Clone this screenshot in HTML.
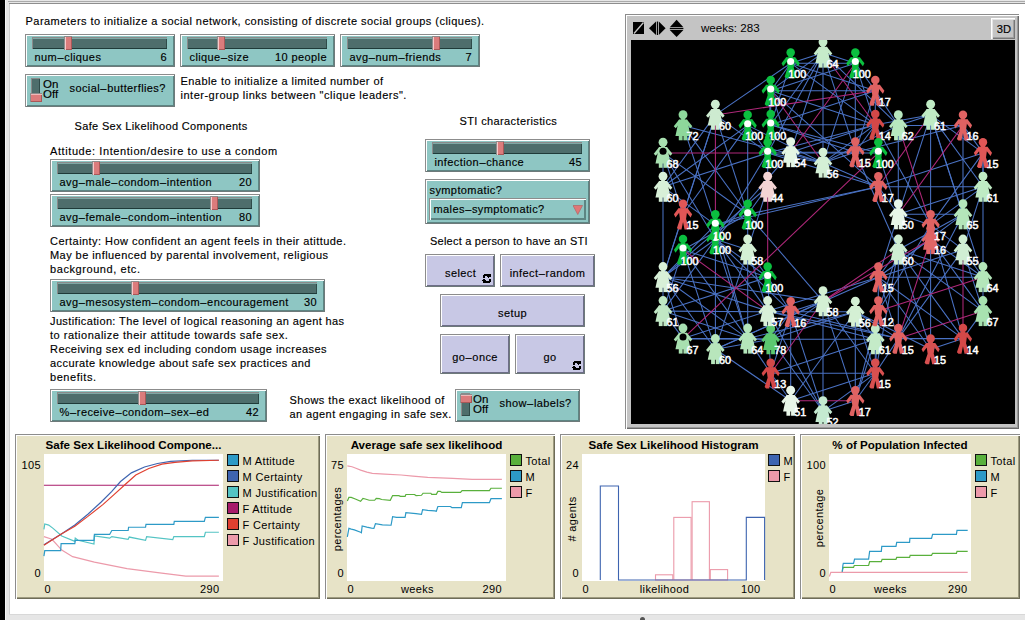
<!DOCTYPE html>
<html><head><meta charset="utf-8"><style>
html,body{margin:0;padding:0;width:1025px;height:620px;overflow:hidden;background:#fff}
body{position:relative;font-family:"Liberation Sans", sans-serif;color:#000}
.t,.box{position:absolute;white-space:pre}
div.t{-webkit-text-stroke:0.15px #000}
.box{box-sizing:border-box}
</style></head><body>
<div class="box" style="left:0;top:0;width:5px;height:620px;background:#000"></div>
<div class="box" style="left:5px;top:0;width:1020px;height:620px;background:#e6e6e6"></div>
<div class="box" style="left:5px;top:0;width:1px;height:620px;background:#f6f6f6"></div>
<div class="box" style="left:8px;top:1px;width:1017px;height:1px;background:#aaaaaa"></div>
<div class="box" style="left:9px;top:3px;width:1016px;height:1px;background:#8e8e8e"></div>
<div class="box" style="left:9px;top:4px;width:1px;height:610px;background:#d0d0d0"></div>
<div class="box" style="left:10px;top:4px;width:1015px;height:610px;background:#fff"></div>
<div class="box" style="left:9px;top:614px;width:1016px;height:1px;background:#d8d8d8"></div>
<div class="box" style="left:640px;top:617px;width:5px;height:5px;border-radius:3px;background:#555"></div>
<div class="t" style="left:25.5px;top:14.19px;font-size:11px;font-weight:400;color:#000;line-height:14px;letter-spacing:0.461px;">Parameters to initialize a social network, consisting of discrete social groups (cliques).</div>
<div class="box" style="left:25px;top:34px;width:150px;height:33px;background:#8ec6c3;box-shadow: inset 1px 1px 0 #8c8c8c, inset -1px -1px 0 #6e7a7a, inset 2px 2px 0 #fff, inset -2px -2px 0 #5d8583"></div>
<div class="box" style="left:32px;top:37px;width:135px;height:12px;background:#4e6e6c;box-shadow: inset 1px 1px 0 #8a8a8a, inset 0 2px 0 #7fa8a5, inset 0 -1px 0 #1f3b39, inset -1px 0 0 #2f4b49"></div>
<div class="box" style="left:64px;top:36px;width:8px;height:14px;background:#db7c7c;box-shadow: inset 1px 1px 0 #8c8c8c, inset 2px 0 0 #f6caca, inset -1px -1px 0 #a85858"></div>
<div class="t" style="left:34.5px;top:50.19px;font-size:11px;font-weight:400;color:#000;line-height:14px;letter-spacing:0.4px;">num<span style="margin:0 0.3px">&#8211;</span>cliques</div>
<div class="t" style="right:858px;top:50.19px;font-size:11px;font-weight:400;color:#000;line-height:14px;text-align:right;letter-spacing:0.4px">6</div>
<div class="box" style="left:180px;top:34px;width:155px;height:33px;background:#8ec6c3;box-shadow: inset 1px 1px 0 #8c8c8c, inset -1px -1px 0 #6e7a7a, inset 2px 2px 0 #fff, inset -2px -2px 0 #5d8583"></div>
<div class="box" style="left:187px;top:37px;width:140px;height:12px;background:#4e6e6c;box-shadow: inset 1px 1px 0 #8a8a8a, inset 0 2px 0 #7fa8a5, inset 0 -1px 0 #1f3b39, inset -1px 0 0 #2f4b49"></div>
<div class="box" style="left:217px;top:36px;width:8px;height:14px;background:#db7c7c;box-shadow: inset 1px 1px 0 #8c8c8c, inset 2px 0 0 #f6caca, inset -1px -1px 0 #a85858"></div>
<div class="t" style="left:189.5px;top:50.19px;font-size:11px;font-weight:400;color:#000;line-height:14px;letter-spacing:0.4px;">clique<span style="margin:0 0.3px">&#8211;</span>size</div>
<div class="t" style="right:698px;top:50.19px;font-size:11px;font-weight:400;color:#000;line-height:14px;text-align:right;letter-spacing:0.4px">10 people</div>
<div class="box" style="left:340px;top:34px;width:140px;height:33px;background:#8ec6c3;box-shadow: inset 1px 1px 0 #8c8c8c, inset -1px -1px 0 #6e7a7a, inset 2px 2px 0 #fff, inset -2px -2px 0 #5d8583"></div>
<div class="box" style="left:347px;top:37px;width:125px;height:12px;background:#4e6e6c;box-shadow: inset 1px 1px 0 #8a8a8a, inset 0 2px 0 #7fa8a5, inset 0 -1px 0 #1f3b39, inset -1px 0 0 #2f4b49"></div>
<div class="box" style="left:432px;top:36px;width:8px;height:14px;background:#db7c7c;box-shadow: inset 1px 1px 0 #8c8c8c, inset 2px 0 0 #f6caca, inset -1px -1px 0 #a85858"></div>
<div class="t" style="left:349.5px;top:50.19px;font-size:11px;font-weight:400;color:#000;line-height:14px;letter-spacing:0.4px;">avg<span style="margin:0 0.3px">&#8211;</span>num<span style="margin:0 0.3px">&#8211;</span>friends</div>
<div class="t" style="right:553px;top:50.19px;font-size:11px;font-weight:400;color:#000;line-height:14px;text-align:right;letter-spacing:0.4px">7</div>
<div class="box" style="left:25px;top:74px;width:150px;height:33px;background:#8ec6c3;box-shadow: inset 1px 1px 0 #8c8c8c, inset -1px -1px 0 #6e7a7a, inset 2px 2px 0 #fff, inset -2px -2px 0 #5d8583"></div>
<div class="box" style="left:31px;top:78px;width:9px;height:23px;background:#4e6e6c;box-shadow: inset 1px 1px 0 #8a8a8a, inset -1px -1px 0 #2f4b49"></div>
<div class="box" style="left:30px;top:93px;width:12px;height:9px;background:#db7c7c;box-shadow: inset 1px 1px 0 #8c8c8c, inset 0 2px 0 #f0b8b8, inset -1px -1px 0 #a85858"></div>
<div class="t" style="left:43px;top:79px;font-size:11.5px;line-height:10px">On<br>Off</div>
<div class="t" style="left:69.5px;top:81.19px;font-size:11px;font-weight:400;color:#000;line-height:14px;letter-spacing:0.4px;">social<span style="margin:0 0.3px">&#8211;</span>butterflies?</div>
<div class="t" style="left:180.5px;top:74.19px;font-size:11px;font-weight:400;color:#000;line-height:14px;letter-spacing:0.442px;">Enable to initialize a limited number of</div>
<div class="t" style="left:180.5px;top:88.19px;font-size:11px;font-weight:400;color:#000;line-height:14px;letter-spacing:0.505px;">inter-group links between "clique leaders".</div>
<div class="t" style="left:74.5px;top:118.69px;font-size:11px;font-weight:400;color:#000;line-height:14px;letter-spacing:0.349px;">Safe Sex Likelihood Components</div>
<div class="t" style="left:50.0px;top:143.69px;font-size:11px;font-weight:400;color:#000;line-height:14px;letter-spacing:0.589px;">Attitude: Intention/desire to use a condom</div>
<div class="box" style="left:50px;top:159px;width:210px;height:33px;background:#8ec6c3;box-shadow: inset 1px 1px 0 #8c8c8c, inset -1px -1px 0 #6e7a7a, inset 2px 2px 0 #fff, inset -2px -2px 0 #5d8583"></div>
<div class="box" style="left:57px;top:162px;width:195px;height:12px;background:#4e6e6c;box-shadow: inset 1px 1px 0 #8a8a8a, inset 0 2px 0 #7fa8a5, inset 0 -1px 0 #1f3b39, inset -1px 0 0 #2f4b49"></div>
<div class="box" style="left:92px;top:161px;width:8px;height:14px;background:#db7c7c;box-shadow: inset 1px 1px 0 #8c8c8c, inset 2px 0 0 #f6caca, inset -1px -1px 0 #a85858"></div>
<div class="t" style="left:59.5px;top:175.19px;font-size:11px;font-weight:400;color:#000;line-height:14px;letter-spacing:0.4px;">avg<span style="margin:0 0.3px">&#8211;</span>male<span style="margin:0 0.3px">&#8211;</span>condom<span style="margin:0 0.3px">&#8211;</span>intention</div>
<div class="t" style="right:773px;top:175.19px;font-size:11px;font-weight:400;color:#000;line-height:14px;text-align:right;letter-spacing:0.4px">20</div>
<div class="box" style="left:50px;top:194px;width:210px;height:33px;background:#8ec6c3;box-shadow: inset 1px 1px 0 #8c8c8c, inset -1px -1px 0 #6e7a7a, inset 2px 2px 0 #fff, inset -2px -2px 0 #5d8583"></div>
<div class="box" style="left:57px;top:197px;width:195px;height:12px;background:#4e6e6c;box-shadow: inset 1px 1px 0 #8a8a8a, inset 0 2px 0 #7fa8a5, inset 0 -1px 0 #1f3b39, inset -1px 0 0 #2f4b49"></div>
<div class="box" style="left:210px;top:196px;width:8px;height:14px;background:#db7c7c;box-shadow: inset 1px 1px 0 #8c8c8c, inset 2px 0 0 #f6caca, inset -1px -1px 0 #a85858"></div>
<div class="t" style="left:59.5px;top:210.19px;font-size:11px;font-weight:400;color:#000;line-height:14px;letter-spacing:0.4px;">avg<span style="margin:0 0.3px">&#8211;</span>female<span style="margin:0 0.3px">&#8211;</span>condom<span style="margin:0 0.3px">&#8211;</span>intention</div>
<div class="t" style="right:773px;top:210.19px;font-size:11px;font-weight:400;color:#000;line-height:14px;text-align:right;letter-spacing:0.4px">80</div>
<div class="t" style="left:50.0px;top:234.19px;font-size:11px;font-weight:400;color:#000;line-height:14px;letter-spacing:0.451px;">Certainty: How confident an agent feels in their atittude.</div>
<div class="t" style="left:50.0px;top:248.19px;font-size:11px;font-weight:400;color:#000;line-height:14px;letter-spacing:0.439px;">May be influenced by parental involvement, religious</div>
<div class="t" style="left:50.0px;top:262.19px;font-size:11px;font-weight:400;color:#000;line-height:14px;letter-spacing:0.577px;">background, etc.</div>
<div class="box" style="left:50px;top:279px;width:275px;height:33px;background:#8ec6c3;box-shadow: inset 1px 1px 0 #8c8c8c, inset -1px -1px 0 #6e7a7a, inset 2px 2px 0 #fff, inset -2px -2px 0 #5d8583"></div>
<div class="box" style="left:57px;top:282px;width:260px;height:12px;background:#4e6e6c;box-shadow: inset 1px 1px 0 #8a8a8a, inset 0 2px 0 #7fa8a5, inset 0 -1px 0 #1f3b39, inset -1px 0 0 #2f4b49"></div>
<div class="box" style="left:131px;top:281px;width:8px;height:14px;background:#db7c7c;box-shadow: inset 1px 1px 0 #8c8c8c, inset 2px 0 0 #f6caca, inset -1px -1px 0 #a85858"></div>
<div class="t" style="left:59.5px;top:295.19px;font-size:11px;font-weight:400;color:#000;line-height:14px;letter-spacing:0.4px;">avg<span style="margin:0 0.3px">&#8211;</span>mesosystem<span style="margin:0 0.3px">&#8211;</span>condom<span style="margin:0 0.3px">&#8211;</span>encouragement</div>
<div class="t" style="right:708px;top:295.19px;font-size:11px;font-weight:400;color:#000;line-height:14px;text-align:right;letter-spacing:0.4px">30</div>
<div class="t" style="left:50.0px;top:314.19px;font-size:11px;font-weight:400;color:#000;line-height:14px;letter-spacing:0.377px;">Justification: The level of logical reasoning an agent has</div>
<div class="t" style="left:50.0px;top:328.19px;font-size:11px;font-weight:400;color:#000;line-height:14px;letter-spacing:0.504px;">to rationalize their attitude towards safe sex.</div>
<div class="t" style="left:50.0px;top:342.19px;font-size:11px;font-weight:400;color:#000;line-height:14px;letter-spacing:0.435px;">Receiving sex ed including condom usage increases</div>
<div class="t" style="left:50.0px;top:356.19px;font-size:11px;font-weight:400;color:#000;line-height:14px;letter-spacing:0.425px;">accurate knowledge about safe sex practices and</div>
<div class="t" style="left:50.0px;top:370.19px;font-size:11px;font-weight:400;color:#000;line-height:14px;letter-spacing:0.551px;">benefits.</div>
<div class="box" style="left:50px;top:389px;width:217px;height:33px;background:#8ec6c3;box-shadow: inset 1px 1px 0 #8c8c8c, inset -1px -1px 0 #6e7a7a, inset 2px 2px 0 #fff, inset -2px -2px 0 #5d8583"></div>
<div class="box" style="left:57px;top:392px;width:202px;height:12px;background:#4e6e6c;box-shadow: inset 1px 1px 0 #8a8a8a, inset 0 2px 0 #7fa8a5, inset 0 -1px 0 #1f3b39, inset -1px 0 0 #2f4b49"></div>
<div class="box" style="left:138px;top:391px;width:8px;height:14px;background:#db7c7c;box-shadow: inset 1px 1px 0 #8c8c8c, inset 2px 0 0 #f6caca, inset -1px -1px 0 #a85858"></div>
<div class="t" style="left:59.5px;top:405.19px;font-size:11px;font-weight:400;color:#000;line-height:14px;letter-spacing:0.4px;">%<span style="margin:0 0.3px">&#8211;</span>receive<span style="margin:0 0.3px">&#8211;</span>condom<span style="margin:0 0.3px">&#8211;</span>sex<span style="margin:0 0.3px">&#8211;</span>ed</div>
<div class="t" style="right:766px;top:405.19px;font-size:11px;font-weight:400;color:#000;line-height:14px;text-align:right;letter-spacing:0.4px">42</div>
<div class="t" style="left:459.5px;top:114.19px;font-size:11px;font-weight:400;color:#000;line-height:14px;letter-spacing:0.38px;">STI characteristics</div>
<div class="box" style="left:425px;top:139px;width:165px;height:33px;background:#8ec6c3;box-shadow: inset 1px 1px 0 #8c8c8c, inset -1px -1px 0 #6e7a7a, inset 2px 2px 0 #fff, inset -2px -2px 0 #5d8583"></div>
<div class="box" style="left:432px;top:142px;width:150px;height:12px;background:#4e6e6c;box-shadow: inset 1px 1px 0 #8a8a8a, inset 0 2px 0 #7fa8a5, inset 0 -1px 0 #1f3b39, inset -1px 0 0 #2f4b49"></div>
<div class="box" style="left:496px;top:141px;width:8px;height:14px;background:#db7c7c;box-shadow: inset 1px 1px 0 #8c8c8c, inset 2px 0 0 #f6caca, inset -1px -1px 0 #a85858"></div>
<div class="t" style="left:434.5px;top:155.19px;font-size:11px;font-weight:400;color:#000;line-height:14px;letter-spacing:0.4px;">infection<span style="margin:0 0.3px">&#8211;</span>chance</div>
<div class="t" style="right:443px;top:155.19px;font-size:11px;font-weight:400;color:#000;line-height:14px;text-align:right;letter-spacing:0.4px">45</div>
<div class="box" style="left:425px;top:179px;width:165px;height:45px;background:#8ec6c3;box-shadow: inset 1px 1px 0 #8c8c8c, inset -1px -1px 0 #6e7a7a, inset 2px 2px 0 #fff, inset -2px -2px 0 #5d8583"></div>
<div class="t" style="left:429.5px;top:183.19px;font-size:11px;font-weight:400;color:#000;line-height:14px;letter-spacing:0.4px;">symptomatic?</div>
<div class="box" style="left:429px;top:198px;width:157px;height:22px;background:#8ec6c3;box-shadow: inset 1px 1px 0 #8c8c8c, inset 2px 2px 0 #fff, inset -1px -1px 0 #5d8583, inset -2px -2px 0 #5d8583"></div>
<div class="t" style="left:433.5px;top:201.69px;font-size:11px;font-weight:400;color:#000;line-height:14px;letter-spacing:0.4px;">males<span style="margin:0 0.3px">&#8211;</span>symptomatic?</div>
<svg class="t" style="left:573px;top:205px" width="10" height="10"><path d="M0 0.5 L9.5 0.5 L4.75 9.5 Z" fill="#e07878" stroke="#b05a5a" stroke-width="0.6"/></svg>
<div class="t" style="left:430.0px;top:234.19px;font-size:11px;font-weight:400;color:#000;line-height:14px;letter-spacing:0.223px;">Select a person to have an STI</div>
<div class="box" style="left:425px;top:254px;width:70px;height:33px;background:#c8c8e5;box-shadow: inset 1px 1px 0 #8c8c8c, inset -1px -1px 0 #6e7a7a, inset 2px 2px 0 #fff, inset -2px -2px 0 #6e6e88"></div>
<div class="t" style="left:445.0px;top:266.19px;font-size:11px;font-weight:400;color:#000;line-height:14px;letter-spacing:0.4px;">select</div>
<svg class="t" style="left:482px;top:274px" width="9" height="9" viewBox="0 0 8 9" shape-rendering="crispEdges"><rect x="1" y="0" width="5" height="2"/><rect x="0" y="1" width="2" height="3"/><polygon points="4.5,0 8,0 8,2.5 6.2,4.3 4.5,2.5"/><rect x="2" y="7" width="5" height="2"/><rect x="6" y="5" width="2" height="3"/><polygon points="3.5,9 0,9 0,6.5 1.8,4.7 3.5,6.5"/></svg>
<div class="box" style="left:500px;top:254px;width:95px;height:33px;background:#c8c8e5;box-shadow: inset 1px 1px 0 #8c8c8c, inset -1px -1px 0 #6e7a7a, inset 2px 2px 0 #fff, inset -2px -2px 0 #6e6e88"></div>
<div class="t" style="left:347.5px;width:400px;top:266.19px;font-size:11px;font-weight:400;color:#000;line-height:14px;text-align:center;letter-spacing:0.4px">infect<span style="margin:0 0.3px">&#8211;</span>random</div>
<div class="box" style="left:440px;top:294px;width:145px;height:33px;background:#c8c8e5;box-shadow: inset 1px 1px 0 #8c8c8c, inset -1px -1px 0 #6e7a7a, inset 2px 2px 0 #fff, inset -2px -2px 0 #6e6e88"></div>
<div class="t" style="left:312.5px;width:400px;top:306.19px;font-size:11px;font-weight:400;color:#000;line-height:14px;text-align:center;letter-spacing:0.4px">setup</div>
<div class="box" style="left:440px;top:334px;width:70px;height:40px;background:#c8c8e5;box-shadow: inset 1px 1px 0 #8c8c8c, inset -1px -1px 0 #6e7a7a, inset 2px 2px 0 #fff, inset -2px -2px 0 #6e6e88"></div>
<div class="t" style="left:275.0px;width:400px;top:350.19px;font-size:11px;font-weight:400;color:#000;line-height:14px;text-align:center;letter-spacing:0.4px">go<span style="margin:0 0.3px">&#8211;</span>once</div>
<div class="box" style="left:515px;top:334px;width:70px;height:40px;background:#c8c8e5;box-shadow: inset 1px 1px 0 #8c8c8c, inset -1px -1px 0 #6e7a7a, inset 2px 2px 0 #fff, inset -2px -2px 0 #6e6e88"></div>
<div class="t" style="left:350.0px;width:400px;top:350.19px;font-size:11px;font-weight:400;color:#000;line-height:14px;text-align:center;letter-spacing:0.4px">go</div>
<svg class="t" style="left:572px;top:361px" width="9" height="9" viewBox="0 0 8 9" shape-rendering="crispEdges"><rect x="1" y="0" width="5" height="2"/><rect x="0" y="1" width="2" height="3"/><polygon points="4.5,0 8,0 8,2.5 6.2,4.3 4.5,2.5"/><rect x="2" y="7" width="5" height="2"/><rect x="6" y="5" width="2" height="3"/><polygon points="3.5,9 0,9 0,6.5 1.8,4.7 3.5,6.5"/></svg>
<div class="t" style="left:289.5px;top:393.49px;font-size:11px;font-weight:400;color:#000;line-height:14px;letter-spacing:0.462px;">Shows the exact likelihood of</div>
<div class="t" style="left:289.5px;top:407.49px;font-size:11px;font-weight:400;color:#000;line-height:14px;letter-spacing:0.412px;">an agent engaging in safe sex.</div>
<div class="box" style="left:455px;top:389px;width:125px;height:33px;background:#8ec6c3;box-shadow: inset 1px 1px 0 #8c8c8c, inset -1px -1px 0 #6e7a7a, inset 2px 2px 0 #fff, inset -2px -2px 0 #5d8583"></div>
<div class="box" style="left:461px;top:393px;width:9px;height:23px;background:#4e6e6c;box-shadow: inset 1px 1px 0 #8a8a8a, inset -1px -1px 0 #2f4b49"></div>
<div class="box" style="left:460px;top:394px;width:12px;height:9px;background:#db7c7c;box-shadow: inset 1px 1px 0 #8c8c8c, inset 0 2px 0 #f0b8b8, inset -1px -1px 0 #a85858"></div>
<div class="t" style="left:473px;top:394px;font-size:11.5px;line-height:10px">On<br>Off</div>
<div class="t" style="left:499.5px;top:396.19px;font-size:11px;font-weight:400;color:#000;line-height:14px;letter-spacing:0.4px;">show<span style="margin:0 0.3px">&#8211;</span>labels?</div>

<div class="box" style="left:625px;top:14px;width:394px;height:415px;background:#c4c4c4;box-shadow: inset 1px 1px 0 #8c8c8c, inset 2px 2px 0 #fff, inset -1px -1px 0 #6a6a6a, inset -2px -2px 0 #9a9a9a"></div>
<svg class="t" style="left:0;top:0" width="1025" height="60">
 <rect x="633" y="22" width="11" height="12" fill="#000"/>
 <line x1="634" y1="33.5" x2="643.5" y2="22.5" stroke="#c8c8c8" stroke-width="1.3"/>
 <polygon points="656,21.5 656,35 649,28.2" fill="#000"/>
 <rect x="656.8" y="21.5" width="1.2" height="13.5" fill="#000"/>
 <polygon points="658.8,21.5 658.8,35 665.6,28.2" fill="#000"/>
 <polygon points="669.8,27.2 683.4,27.2 676.6,19.8" fill="#000"/>
 <rect x="669.8" y="28" width="13.6" height="1.2" fill="#000"/>
 <polygon points="669.8,30 683.4,30 676.6,37" fill="#000"/>
 <text x="701" y="31.8" font-family="Liberation Sans" font-size="11.6">weeks: 283</text>
</svg>
<div class="box" style="left:991px;top:18px;width:24px;height:21px;background:#c4c4c4;box-shadow: inset 1px 1px 0 #fff, inset 2px 2px 0 #e4e4e4, inset -1px -1px 0 #777, inset -2px -2px 0 #a0a0a0"></div>
<div class="t" style="left:992px;top:21.5px;width:24px;text-align:center;font-size:11.2px;line-height:14px">3D</div>

<svg class="t" style="left:631px;top:40px" width="384" height="384" viewBox="631 40 384 384">
<rect x="631" y="40" width="384" height="384" fill="#000"/>
<defs><g id="male"><circle cx="150" cy="45" r="42"/><polygon points="105,90 120,195 90,285 105,300 135,300 150,225 165,300 195,300 210,285 180,195 195,90"/><rect x="127" y="79" width="45" height="16"/><polygon points="195,90 240,150 225,180 165,105"/><polygon points="105,90 60,150 75,180 135,105"/></g><g id="female"><circle cx="150" cy="45" r="44"/><rect x="132" y="80" width="36" height="20"/><polygon points="110,92 190,92 225,255 75,255"/><polygon points="188,92 242,158 222,178 170,118"/><polygon points="112,92 58,158 78,178 130,118"/><rect x="108" y="245" width="38" height="53"/><rect x="154" y="245" width="38" height="53"/></g></defs>
<g stroke-width="1.05" fill="none">
<line x1="823.0" y1="52.7" x2="770.7" y2="124.7" stroke="#4a72c4"/>
<line x1="823.0" y1="52.7" x2="790.7" y2="152.2" stroke="#4a72c4"/>
<line x1="823.0" y1="52.7" x2="855.3" y2="152.2" stroke="#4a72c4"/>
<line x1="823.0" y1="52.7" x2="855.3" y2="63.2" stroke="#4a72c4"/>
<line x1="823.0" y1="52.7" x2="767.7" y2="152.9" stroke="#4a72c4"/>
<line x1="823.0" y1="52.7" x2="898.3" y2="125.4" stroke="#4a72c4"/>
<line x1="790.7" y1="63.2" x2="770.7" y2="124.7" stroke="#4a72c4"/>
<line x1="790.7" y1="63.2" x2="715.4" y2="114.9" stroke="#4a72c4"/>
<line x1="770.7" y1="90.7" x2="770.7" y2="124.7" stroke="#4a72c4"/>
<line x1="770.7" y1="90.7" x2="790.7" y2="152.2" stroke="#4a72c4"/>
<line x1="770.7" y1="90.7" x2="767.7" y2="152.9" stroke="#4a72c4"/>
<line x1="770.7" y1="90.7" x2="878.3" y2="186.8" stroke="#4a72c4"/>
<line x1="770.7" y1="124.7" x2="855.3" y2="152.2" stroke="#4a72c4"/>
<line x1="770.7" y1="124.7" x2="875.3" y2="90.7" stroke="#4a72c4"/>
<line x1="770.7" y1="124.7" x2="878.3" y2="152.9" stroke="#4a72c4"/>
<line x1="790.7" y1="152.2" x2="823.0" y2="162.7" stroke="#4a72c4"/>
<line x1="790.7" y1="152.2" x2="855.3" y2="152.2" stroke="#4a72c4"/>
<line x1="790.7" y1="152.2" x2="875.3" y2="124.7" stroke="#4a72c4"/>
<line x1="790.7" y1="152.2" x2="715.4" y2="239.2" stroke="#4a72c4"/>
<line x1="823.0" y1="162.7" x2="855.3" y2="152.2" stroke="#4a72c4"/>
<line x1="823.0" y1="162.7" x2="875.3" y2="124.7" stroke="#4a72c4"/>
<line x1="823.0" y1="162.7" x2="855.3" y2="63.2" stroke="#4a72c4"/>
<line x1="823.0" y1="162.7" x2="683.0" y2="125.4" stroke="#4a72c4"/>
<line x1="823.0" y1="162.7" x2="767.7" y2="152.9" stroke="#4a72c4"/>
<line x1="823.0" y1="162.7" x2="747.7" y2="125.4" stroke="#4a72c4"/>
<line x1="823.0" y1="162.7" x2="898.3" y2="125.4" stroke="#4a72c4"/>
<line x1="855.3" y1="152.2" x2="875.3" y2="124.7" stroke="#4a72c4"/>
<line x1="855.3" y1="152.2" x2="875.3" y2="90.7" stroke="#4a72c4"/>
<line x1="855.3" y1="152.2" x2="855.3" y2="63.2" stroke="#4a72c4"/>
<line x1="855.3" y1="152.2" x2="963.0" y2="125.4" stroke="#4a72c4"/>
<line x1="855.3" y1="152.2" x2="898.3" y2="249.7" stroke="#4a72c4"/>
<line x1="875.3" y1="124.7" x2="875.3" y2="90.7" stroke="#4a72c4"/>
<line x1="875.3" y1="124.7" x2="855.3" y2="63.2" stroke="#4a72c4"/>
<line x1="875.3" y1="124.7" x2="767.7" y2="152.9" stroke="#4a72c4"/>
<line x1="875.3" y1="124.7" x2="930.6" y2="114.9" stroke="#4a72c4"/>
<line x1="875.3" y1="124.7" x2="930.6" y2="224.9" stroke="#4a72c4"/>
<line x1="875.3" y1="90.7" x2="855.3" y2="63.2" stroke="#4a72c4"/>
<line x1="875.3" y1="90.7" x2="898.3" y2="125.4" stroke="#4a72c4"/>
<line x1="715.4" y1="114.9" x2="663.0" y2="186.8" stroke="#4a72c4"/>
<line x1="715.4" y1="114.9" x2="683.0" y2="214.3" stroke="#4a72c4"/>
<line x1="715.4" y1="114.9" x2="747.7" y2="214.3" stroke="#4a72c4"/>
<line x1="715.4" y1="114.9" x2="767.7" y2="152.9" stroke="#4a72c4"/>
<line x1="715.4" y1="114.9" x2="663.0" y2="277.2" stroke="#4a72c4"/>
<line x1="683.0" y1="125.4" x2="715.4" y2="224.9" stroke="#4a72c4"/>
<line x1="683.0" y1="125.4" x2="747.7" y2="214.3" stroke="#4a72c4"/>
<line x1="663.0" y1="152.9" x2="663.0" y2="186.8" stroke="#4a72c4"/>
<line x1="663.0" y1="152.9" x2="683.0" y2="214.3" stroke="#4a72c4"/>
<line x1="663.0" y1="152.9" x2="747.7" y2="214.3" stroke="#4a72c4"/>
<line x1="663.0" y1="152.9" x2="715.4" y2="239.2" stroke="#4a72c4"/>
<line x1="663.0" y1="186.8" x2="715.4" y2="224.9" stroke="#4a72c4"/>
<line x1="663.0" y1="186.8" x2="767.7" y2="152.9" stroke="#4a72c4"/>
<line x1="663.0" y1="186.8" x2="747.7" y2="125.4" stroke="#4a72c4"/>
<line x1="683.0" y1="214.3" x2="747.7" y2="125.4" stroke="#4a72c4"/>
<line x1="683.0" y1="214.3" x2="663.0" y2="277.2" stroke="#4a72c4"/>
<line x1="715.4" y1="224.9" x2="747.7" y2="214.3" stroke="#4a72c4"/>
<line x1="715.4" y1="224.9" x2="663.0" y2="277.2" stroke="#4a72c4"/>
<line x1="715.4" y1="224.9" x2="747.7" y2="338.6" stroke="#4a72c4"/>
<line x1="747.7" y1="214.3" x2="767.7" y2="186.8" stroke="#4a72c4"/>
<line x1="747.7" y1="214.3" x2="823.0" y2="301.3" stroke="#4a72c4"/>
<line x1="747.7" y1="214.3" x2="683.0" y2="249.7" stroke="#4a72c4"/>
<line x1="747.7" y1="214.3" x2="747.7" y2="249.7" stroke="#4a72c4"/>
<line x1="767.7" y1="186.8" x2="767.7" y2="152.9" stroke="#4a72c4"/>
<line x1="767.7" y1="186.8" x2="663.0" y2="277.2" stroke="#4a72c4"/>
<line x1="767.7" y1="186.8" x2="747.7" y2="249.7" stroke="#4a72c4"/>
<line x1="767.7" y1="152.9" x2="747.7" y2="125.4" stroke="#4a72c4"/>
<line x1="767.7" y1="152.9" x2="878.3" y2="152.9" stroke="#4a72c4"/>
<line x1="767.7" y1="152.9" x2="878.3" y2="186.8" stroke="#4a72c4"/>
<line x1="767.7" y1="152.9" x2="715.4" y2="239.2" stroke="#4a72c4"/>
<line x1="930.6" y1="114.9" x2="898.3" y2="125.4" stroke="#4a72c4"/>
<line x1="930.6" y1="114.9" x2="898.3" y2="214.3" stroke="#4a72c4"/>
<line x1="930.6" y1="114.9" x2="930.6" y2="224.9" stroke="#4a72c4"/>
<line x1="930.6" y1="114.9" x2="963.0" y2="214.3" stroke="#4a72c4"/>
<line x1="930.6" y1="114.9" x2="983.0" y2="186.8" stroke="#4a72c4"/>
<line x1="930.6" y1="114.9" x2="983.0" y2="152.9" stroke="#4a72c4"/>
<line x1="930.6" y1="114.9" x2="983.0" y2="277.2" stroke="#4a72c4"/>
<line x1="898.3" y1="125.4" x2="963.0" y2="125.4" stroke="#4a72c4"/>
<line x1="878.3" y1="152.9" x2="898.3" y2="214.3" stroke="#4a72c4"/>
<line x1="878.3" y1="186.8" x2="898.3" y2="214.3" stroke="#4a72c4"/>
<line x1="878.3" y1="186.8" x2="983.0" y2="186.8" stroke="#4a72c4"/>
<line x1="878.3" y1="186.8" x2="983.0" y2="152.9" stroke="#4a72c4"/>
<line x1="898.3" y1="214.3" x2="930.6" y2="224.9" stroke="#4a72c4"/>
<line x1="898.3" y1="214.3" x2="963.0" y2="214.3" stroke="#4a72c4"/>
<line x1="898.3" y1="214.3" x2="983.0" y2="186.8" stroke="#4a72c4"/>
<line x1="898.3" y1="214.3" x2="878.3" y2="277.2" stroke="#4a72c4"/>
<line x1="930.6" y1="224.9" x2="983.0" y2="186.8" stroke="#4a72c4"/>
<line x1="930.6" y1="224.9" x2="983.0" y2="152.9" stroke="#4a72c4"/>
<line x1="930.6" y1="224.9" x2="878.3" y2="311.1" stroke="#4a72c4"/>
<line x1="930.6" y1="224.9" x2="963.0" y2="338.6" stroke="#4a72c4"/>
<line x1="930.6" y1="224.9" x2="963.0" y2="249.7" stroke="#4a72c4"/>
<line x1="963.0" y1="214.3" x2="898.3" y2="249.7" stroke="#4a72c4"/>
<line x1="963.0" y1="214.3" x2="878.3" y2="277.2" stroke="#4a72c4"/>
<line x1="963.0" y1="214.3" x2="898.3" y2="338.6" stroke="#4a72c4"/>
<line x1="983.0" y1="186.8" x2="983.0" y2="152.9" stroke="#4a72c4"/>
<line x1="983.0" y1="186.8" x2="963.0" y2="249.7" stroke="#4a72c4"/>
<line x1="983.0" y1="152.9" x2="963.0" y2="125.4" stroke="#4a72c4"/>
<line x1="983.0" y1="152.9" x2="983.0" y2="277.2" stroke="#4a72c4"/>
<line x1="930.6" y1="239.2" x2="878.3" y2="277.2" stroke="#4a72c4"/>
<line x1="930.6" y1="239.2" x2="983.0" y2="311.1" stroke="#4a72c4"/>
<line x1="930.6" y1="239.2" x2="983.0" y2="277.2" stroke="#4a72c4"/>
<line x1="898.3" y1="249.7" x2="878.3" y2="277.2" stroke="#4a72c4"/>
<line x1="898.3" y1="249.7" x2="878.3" y2="311.1" stroke="#4a72c4"/>
<line x1="898.3" y1="249.7" x2="898.3" y2="338.6" stroke="#4a72c4"/>
<line x1="898.3" y1="249.7" x2="930.6" y2="349.2" stroke="#4a72c4"/>
<line x1="898.3" y1="249.7" x2="963.0" y2="338.6" stroke="#4a72c4"/>
<line x1="898.3" y1="249.7" x2="983.0" y2="311.1" stroke="#4a72c4"/>
<line x1="898.3" y1="249.7" x2="983.0" y2="277.2" stroke="#4a72c4"/>
<line x1="898.3" y1="249.7" x2="875.3" y2="373.3" stroke="#4a72c4"/>
<line x1="878.3" y1="277.2" x2="878.3" y2="311.1" stroke="#4a72c4"/>
<line x1="878.3" y1="277.2" x2="898.3" y2="338.6" stroke="#4a72c4"/>
<line x1="878.3" y1="277.2" x2="930.6" y2="349.2" stroke="#4a72c4"/>
<line x1="878.3" y1="277.2" x2="963.0" y2="338.6" stroke="#4a72c4"/>
<line x1="878.3" y1="277.2" x2="983.0" y2="277.2" stroke="#4a72c4"/>
<line x1="878.3" y1="277.2" x2="963.0" y2="249.7" stroke="#4a72c4"/>
<line x1="878.3" y1="277.2" x2="715.4" y2="349.2" stroke="#4a72c4"/>
<line x1="878.3" y1="277.2" x2="767.7" y2="311.1" stroke="#4a72c4"/>
<line x1="878.3" y1="311.1" x2="855.3" y2="400.8" stroke="#4a72c4"/>
<line x1="878.3" y1="311.1" x2="875.3" y2="373.3" stroke="#4a72c4"/>
<line x1="898.3" y1="338.6" x2="963.0" y2="338.6" stroke="#4a72c4"/>
<line x1="898.3" y1="338.6" x2="963.0" y2="249.7" stroke="#4a72c4"/>
<line x1="898.3" y1="338.6" x2="790.7" y2="311.8" stroke="#4a72c4"/>
<line x1="898.3" y1="338.6" x2="875.3" y2="373.3" stroke="#4a72c4"/>
<line x1="898.3" y1="338.6" x2="855.3" y2="311.8" stroke="#4a72c4"/>
<line x1="898.3" y1="338.6" x2="767.7" y2="311.1" stroke="#4a72c4"/>
<line x1="930.6" y1="349.2" x2="963.0" y2="338.6" stroke="#4a72c4"/>
<line x1="930.6" y1="349.2" x2="855.3" y2="311.8" stroke="#4a72c4"/>
<line x1="963.0" y1="338.6" x2="983.0" y2="311.1" stroke="#4a72c4"/>
<line x1="983.0" y1="311.1" x2="983.0" y2="277.2" stroke="#4a72c4"/>
<line x1="983.0" y1="311.1" x2="963.0" y2="249.7" stroke="#4a72c4"/>
<line x1="983.0" y1="277.2" x2="963.0" y2="249.7" stroke="#4a72c4"/>
<line x1="823.0" y1="301.3" x2="790.7" y2="311.8" stroke="#4a72c4"/>
<line x1="823.0" y1="301.3" x2="770.7" y2="339.3" stroke="#4a72c4"/>
<line x1="823.0" y1="301.3" x2="855.3" y2="400.8" stroke="#4a72c4"/>
<line x1="823.0" y1="301.3" x2="875.3" y2="373.3" stroke="#4a72c4"/>
<line x1="823.0" y1="301.3" x2="663.0" y2="277.2" stroke="#4a72c4"/>
<line x1="823.0" y1="301.3" x2="715.4" y2="349.2" stroke="#4a72c4"/>
<line x1="790.7" y1="311.8" x2="770.7" y2="339.3" stroke="#4a72c4"/>
<line x1="790.7" y1="311.8" x2="770.7" y2="373.3" stroke="#4a72c4"/>
<line x1="790.7" y1="311.8" x2="823.0" y2="411.3" stroke="#4a72c4"/>
<line x1="790.7" y1="311.8" x2="855.3" y2="311.8" stroke="#4a72c4"/>
<line x1="790.7" y1="311.8" x2="715.4" y2="239.2" stroke="#4a72c4"/>
<line x1="790.7" y1="311.8" x2="663.0" y2="311.1" stroke="#4a72c4"/>
<line x1="790.7" y1="311.8" x2="767.7" y2="277.2" stroke="#4a72c4"/>
<line x1="770.7" y1="339.3" x2="823.0" y2="411.3" stroke="#4a72c4"/>
<line x1="770.7" y1="339.3" x2="855.3" y2="311.8" stroke="#4a72c4"/>
<line x1="770.7" y1="339.3" x2="683.0" y2="338.6" stroke="#4a72c4"/>
<line x1="770.7" y1="339.3" x2="715.4" y2="349.2" stroke="#4a72c4"/>
<line x1="770.7" y1="339.3" x2="747.7" y2="338.6" stroke="#4a72c4"/>
<line x1="770.7" y1="339.3" x2="767.7" y2="311.1" stroke="#4a72c4"/>
<line x1="770.7" y1="339.3" x2="767.7" y2="277.2" stroke="#4a72c4"/>
<line x1="770.7" y1="373.3" x2="790.7" y2="400.8" stroke="#4a72c4"/>
<line x1="770.7" y1="373.3" x2="875.3" y2="339.3" stroke="#4a72c4"/>
<line x1="770.7" y1="373.3" x2="747.7" y2="338.6" stroke="#4a72c4"/>
<line x1="770.7" y1="373.3" x2="767.7" y2="311.1" stroke="#4a72c4"/>
<line x1="790.7" y1="400.8" x2="875.3" y2="373.3" stroke="#4a72c4"/>
<line x1="790.7" y1="400.8" x2="855.3" y2="311.8" stroke="#4a72c4"/>
<line x1="790.7" y1="400.8" x2="715.4" y2="349.2" stroke="#4a72c4"/>
<line x1="823.0" y1="411.3" x2="855.3" y2="400.8" stroke="#4a72c4"/>
<line x1="823.0" y1="411.3" x2="875.3" y2="373.3" stroke="#4a72c4"/>
<line x1="823.0" y1="411.3" x2="767.7" y2="311.1" stroke="#4a72c4"/>
<line x1="855.3" y1="400.8" x2="875.3" y2="373.3" stroke="#4a72c4"/>
<line x1="855.3" y1="400.8" x2="875.3" y2="339.3" stroke="#4a72c4"/>
<line x1="855.3" y1="400.8" x2="855.3" y2="311.8" stroke="#4a72c4"/>
<line x1="875.3" y1="373.3" x2="875.3" y2="339.3" stroke="#4a72c4"/>
<line x1="875.3" y1="373.3" x2="855.3" y2="311.8" stroke="#4a72c4"/>
<line x1="875.3" y1="339.3" x2="855.3" y2="311.8" stroke="#4a72c4"/>
<line x1="875.3" y1="339.3" x2="767.7" y2="311.1" stroke="#4a72c4"/>
<line x1="855.3" y1="311.8" x2="747.7" y2="338.6" stroke="#4a72c4"/>
<line x1="715.4" y1="239.2" x2="663.0" y2="277.2" stroke="#4a72c4"/>
<line x1="715.4" y1="239.2" x2="663.0" y2="311.1" stroke="#4a72c4"/>
<line x1="715.4" y1="239.2" x2="715.4" y2="349.2" stroke="#4a72c4"/>
<line x1="715.4" y1="239.2" x2="747.7" y2="338.6" stroke="#4a72c4"/>
<line x1="715.4" y1="239.2" x2="767.7" y2="311.1" stroke="#4a72c4"/>
<line x1="715.4" y1="239.2" x2="767.7" y2="277.2" stroke="#4a72c4"/>
<line x1="715.4" y1="239.2" x2="747.7" y2="249.7" stroke="#4a72c4"/>
<line x1="683.0" y1="249.7" x2="663.0" y2="311.1" stroke="#4a72c4"/>
<line x1="683.0" y1="249.7" x2="715.4" y2="349.2" stroke="#4a72c4"/>
<line x1="683.0" y1="249.7" x2="747.7" y2="338.6" stroke="#4a72c4"/>
<line x1="683.0" y1="249.7" x2="767.7" y2="277.2" stroke="#4a72c4"/>
<line x1="663.0" y1="277.2" x2="663.0" y2="311.1" stroke="#4a72c4"/>
<line x1="663.0" y1="277.2" x2="683.0" y2="338.6" stroke="#4a72c4"/>
<line x1="663.0" y1="277.2" x2="715.4" y2="349.2" stroke="#4a72c4"/>
<line x1="663.0" y1="277.2" x2="747.7" y2="338.6" stroke="#4a72c4"/>
<line x1="663.0" y1="277.2" x2="767.7" y2="311.1" stroke="#4a72c4"/>
<line x1="663.0" y1="277.2" x2="767.7" y2="277.2" stroke="#4a72c4"/>
<line x1="663.0" y1="311.1" x2="683.0" y2="338.6" stroke="#4a72c4"/>
<line x1="663.0" y1="311.1" x2="747.7" y2="338.6" stroke="#4a72c4"/>
<line x1="663.0" y1="311.1" x2="767.7" y2="277.2" stroke="#4a72c4"/>
<line x1="683.0" y1="338.6" x2="747.7" y2="338.6" stroke="#4a72c4"/>
<line x1="683.0" y1="338.6" x2="767.7" y2="311.1" stroke="#4a72c4"/>
<line x1="715.4" y1="349.2" x2="747.7" y2="249.7" stroke="#4a72c4"/>
<line x1="747.7" y1="338.6" x2="747.7" y2="249.7" stroke="#4a72c4"/>
<line x1="767.7" y1="311.1" x2="747.7" y2="249.7" stroke="#4a72c4"/>
<line x1="767.7" y1="277.2" x2="747.7" y2="249.7" stroke="#4a72c4"/>
<line x1="767.7" y1="186.8" x2="767.7" y2="277.2" stroke="#b0287a"/>
<line x1="663.0" y1="186.8" x2="663.0" y2="277.2" stroke="#4a72c4"/>
<line x1="855.3" y1="63.2" x2="790.7" y2="152.2" stroke="#b0287a"/>
<line x1="823.0" y1="52.7" x2="875.3" y2="124.7" stroke="#b0287a"/>
<line x1="770.7" y1="90.7" x2="823.0" y2="162.7" stroke="#b0287a"/>
<line x1="715.4" y1="114.9" x2="875.3" y2="90.7" stroke="#b0287a"/>
<line x1="878.3" y1="152.9" x2="683.0" y2="338.6" stroke="#b0287a"/>
<line x1="823.0" y1="301.3" x2="898.3" y2="249.7" stroke="#b0287a"/>
<line x1="823.0" y1="52.7" x2="823.0" y2="162.7" stroke="#4a72c4"/>
<line x1="790.7" y1="63.2" x2="855.3" y2="63.2" stroke="#4a72c4"/>
<line x1="770.7" y1="90.7" x2="875.3" y2="90.7" stroke="#4a72c4"/>
<line x1="770.7" y1="124.7" x2="875.3" y2="124.7" stroke="#4a72c4"/>
<line x1="790.7" y1="63.2" x2="823.0" y2="52.7" stroke="#4a72c4"/>
<line x1="790.7" y1="63.2" x2="875.3" y2="90.7" stroke="#4a72c4"/>
<line x1="790.7" y1="63.2" x2="875.3" y2="124.7" stroke="#4a72c4"/>
<line x1="790.7" y1="63.2" x2="770.7" y2="90.7" stroke="#4a72c4"/>
<line x1="770.7" y1="90.7" x2="855.3" y2="63.2" stroke="#4a72c4"/>
<line x1="770.7" y1="90.7" x2="823.0" y2="52.7" stroke="#4a72c4"/>
<line x1="770.7" y1="90.7" x2="875.3" y2="124.7" stroke="#4a72c4"/>
<line x1="747.7" y1="214.3" x2="878.3" y2="186.8" stroke="#4a72c4"/>
<line x1="715.4" y1="224.9" x2="878.3" y2="186.8" stroke="#4a72c4"/>
<line x1="823.0" y1="162.7" x2="878.3" y2="186.8" stroke="#4a72c4"/>
<line x1="823.0" y1="301.3" x2="823.0" y2="411.3" stroke="#4a72c4"/>
<line x1="770.7" y1="373.3" x2="875.3" y2="373.3" stroke="#4a72c4"/>
<line x1="770.7" y1="339.3" x2="875.3" y2="339.3" stroke="#4a72c4"/>
<line x1="790.7" y1="311.8" x2="790.7" y2="400.8" stroke="#4a72c4"/>
<line x1="790.7" y1="400.8" x2="855.3" y2="400.8" stroke="#b0287a"/>
<line x1="930.6" y1="239.2" x2="930.6" y2="349.2" stroke="#4a72c4"/>
<line x1="963.0" y1="125.4" x2="963.0" y2="214.3" stroke="#4a72c4"/>
<line x1="963.0" y1="249.7" x2="963.0" y2="338.6" stroke="#b0287a"/>
<line x1="898.3" y1="125.4" x2="898.3" y2="214.3" stroke="#4a72c4"/>
<line x1="715.4" y1="114.9" x2="715.4" y2="224.9" stroke="#b0287a"/>
<line x1="663.0" y1="152.9" x2="767.7" y2="152.9" stroke="#b0287a"/>
<line x1="747.7" y1="125.4" x2="747.7" y2="214.3" stroke="#4a72c4"/>
<line x1="683.0" y1="249.7" x2="767.7" y2="311.1" stroke="#b0287a"/>
<line x1="878.3" y1="311.1" x2="983.0" y2="277.2" stroke="#b0287a"/>
<line x1="898.3" y1="338.6" x2="983.0" y2="311.1" stroke="#b0287a"/>
<line x1="930.6" y1="239.2" x2="898.3" y2="338.6" stroke="#b0287a"/>
<line x1="823.0" y1="301.3" x2="930.6" y2="239.2" stroke="#b0287a"/>
<line x1="898.3" y1="125.4" x2="930.6" y2="224.9" stroke="#b0287a"/>
<line x1="963.0" y1="125.4" x2="898.3" y2="214.3" stroke="#b0287a"/>
<line x1="930.6" y1="114.9" x2="878.3" y2="186.8" stroke="#b0287a"/>
<line x1="770.7" y1="373.3" x2="823.0" y2="301.3" stroke="#b0287a"/>
</g>
<g transform="translate(823.00,301.30) scale(0.101) translate(-150,-150)" fill="#d4f0d4"><use href="#female"/></g>
<text x="838.5" y="316.3" text-anchor="end" font-family="Liberation Sans" font-size="10.8" fill="#fff" stroke="#fff" stroke-width="0.5">58</text>
<g transform="translate(790.67,311.80) scale(0.101) translate(-150,-150)" fill="#e06262"><use href="#male"/></g>
<text x="806.2" y="326.8" text-anchor="end" font-family="Liberation Sans" font-size="10.8" fill="#fff" stroke="#fff" stroke-width="0.5">16</text>
<g transform="translate(770.69,339.30) scale(0.101) translate(-150,-150)" fill="#5cc870"><use href="#female"/></g>
<text x="786.2" y="354.3" text-anchor="end" font-family="Liberation Sans" font-size="10.8" fill="#fff" stroke="#fff" stroke-width="0.5">78</text>
<g transform="translate(770.69,373.30) scale(0.101) translate(-150,-150)" fill="#d44848"><use href="#male"/></g>
<text x="786.2" y="388.3" text-anchor="end" font-family="Liberation Sans" font-size="10.8" fill="#fff" stroke="#fff" stroke-width="0.5">13</text>
<g transform="translate(790.67,400.80) scale(0.101) translate(-150,-150)" fill="#e8f6e8"><use href="#female"/></g>
<text x="806.2" y="415.8" text-anchor="end" font-family="Liberation Sans" font-size="10.8" fill="#fff" stroke="#fff" stroke-width="0.5">51</text>
<g transform="translate(823.00,411.30) scale(0.101) translate(-150,-150)" fill="#c4ead0"><use href="#female"/></g>
<text x="838.5" y="426.3" text-anchor="end" font-family="Liberation Sans" font-size="10.8" fill="#fff" stroke="#fff" stroke-width="0.5">52</text>
<g transform="translate(855.33,400.80) scale(0.101) translate(-150,-150)" fill="#e06262"><use href="#male"/></g>
<text x="870.8" y="415.8" text-anchor="end" font-family="Liberation Sans" font-size="10.8" fill="#fff" stroke="#fff" stroke-width="0.5">17</text>
<g transform="translate(875.31,373.30) scale(0.101) translate(-150,-150)" fill="#d85050"><use href="#male"/></g>
<text x="890.8" y="388.3" text-anchor="end" font-family="Liberation Sans" font-size="10.8" fill="#fff" stroke="#fff" stroke-width="0.5">15</text>
<g transform="translate(875.31,339.30) scale(0.101) translate(-150,-150)" fill="#c4ebc8"><use href="#female"/></g>
<text x="890.8" y="354.3" text-anchor="end" font-family="Liberation Sans" font-size="10.8" fill="#fff" stroke="#fff" stroke-width="0.5">61</text>
<g transform="translate(855.33,311.80) scale(0.101) translate(-150,-150)" fill="#d4f0d4"><use href="#female"/></g>
<text x="870.8" y="326.8" text-anchor="end" font-family="Liberation Sans" font-size="10.8" fill="#fff" stroke="#fff" stroke-width="0.5">56</text>
<g transform="translate(715.35,239.15) scale(0.101) translate(-150,-150)" fill="#0bbf3f"><use href="#male"/><circle cx="150" cy="134" r="35" fill="#fff"/></g>
<text x="730.9" y="254.2" text-anchor="end" font-family="Liberation Sans" font-size="10.8" fill="#fff" stroke="#fff" stroke-width="0.5">100</text>
<g transform="translate(683.02,249.65) scale(0.101) translate(-150,-150)" fill="#0bbf3f"><use href="#male"/><circle cx="150" cy="134" r="35" fill="#fff"/></g>
<text x="698.5" y="264.7" text-anchor="end" font-family="Liberation Sans" font-size="10.8" fill="#fff" stroke="#fff" stroke-width="0.5">100</text>
<g transform="translate(663.04,277.15) scale(0.101) translate(-150,-150)" fill="#d8f0d8"><use href="#female"/></g>
<text x="678.5" y="292.2" text-anchor="end" font-family="Liberation Sans" font-size="10.8" fill="#fff" stroke="#fff" stroke-width="0.5">56</text>
<g transform="translate(663.04,311.15) scale(0.101) translate(-150,-150)" fill="#c0e8c4"><use href="#female"/></g>
<text x="678.5" y="326.1" text-anchor="end" font-family="Liberation Sans" font-size="10.8" fill="#fff" stroke="#fff" stroke-width="0.5">61</text>
<g transform="translate(683.02,338.65) scale(0.101) translate(-150,-150)" fill="#a8e0b0"><use href="#female"/><circle cx="150" cy="134" r="35" fill="#000"/></g>
<text x="698.5" y="353.6" text-anchor="end" font-family="Liberation Sans" font-size="10.8" fill="#fff" stroke="#fff" stroke-width="0.5">67</text>
<g transform="translate(715.35,349.15) scale(0.101) translate(-150,-150)" fill="#b8e6bc"><use href="#female"/></g>
<text x="730.9" y="364.2" text-anchor="end" font-family="Liberation Sans" font-size="10.8" fill="#fff" stroke="#fff" stroke-width="0.5">60</text>
<g transform="translate(747.68,338.65) scale(0.101) translate(-150,-150)" fill="#b4e6ba"><use href="#female"/></g>
<text x="763.2" y="353.6" text-anchor="end" font-family="Liberation Sans" font-size="10.8" fill="#fff" stroke="#fff" stroke-width="0.5">64</text>
<g transform="translate(767.66,311.15) scale(0.101) translate(-150,-150)" fill="#d8f0d8"><use href="#female"/></g>
<text x="783.2" y="326.1" text-anchor="end" font-family="Liberation Sans" font-size="10.8" fill="#fff" stroke="#fff" stroke-width="0.5">57</text>
<g transform="translate(767.66,277.15) scale(0.101) translate(-150,-150)" fill="#0bbf3f"><use href="#male"/><circle cx="150" cy="134" r="35" fill="#fff"/></g>
<text x="783.2" y="292.2" text-anchor="end" font-family="Liberation Sans" font-size="10.8" fill="#fff" stroke="#fff" stroke-width="0.5">100</text>
<g transform="translate(747.68,249.65) scale(0.101) translate(-150,-150)" fill="#d4f0d4"><use href="#female"/></g>
<text x="763.2" y="264.7" text-anchor="end" font-family="Liberation Sans" font-size="10.8" fill="#fff" stroke="#fff" stroke-width="0.5">58</text>
<g transform="translate(930.65,239.15) scale(0.101) translate(-150,-150)" fill="#e06666"><use href="#female"/></g>
<text x="946.1" y="254.2" text-anchor="end" font-family="Liberation Sans" font-size="10.8" fill="#fff" stroke="#fff" stroke-width="0.5">16</text>
<g transform="translate(898.32,249.65) scale(0.101) translate(-150,-150)" fill="#cfeed3"><use href="#female"/></g>
<text x="913.8" y="264.7" text-anchor="end" font-family="Liberation Sans" font-size="10.8" fill="#fff" stroke="#fff" stroke-width="0.5">60</text>
<g transform="translate(878.34,277.15) scale(0.101) translate(-150,-150)" fill="#e06262"><use href="#male"/></g>
<text x="893.8" y="292.2" text-anchor="end" font-family="Liberation Sans" font-size="10.8" fill="#fff" stroke="#fff" stroke-width="0.5">15</text>
<g transform="translate(878.34,311.15) scale(0.101) translate(-150,-150)" fill="#e06262"><use href="#male"/></g>
<text x="893.8" y="326.1" text-anchor="end" font-family="Liberation Sans" font-size="10.8" fill="#fff" stroke="#fff" stroke-width="0.5">12</text>
<g transform="translate(898.32,338.65) scale(0.101) translate(-150,-150)" fill="#e06262"><use href="#male"/></g>
<text x="913.8" y="353.6" text-anchor="end" font-family="Liberation Sans" font-size="10.8" fill="#fff" stroke="#fff" stroke-width="0.5">15</text>
<g transform="translate(930.65,349.15) scale(0.101) translate(-150,-150)" fill="#d85050"><use href="#male"/></g>
<text x="946.1" y="364.2" text-anchor="end" font-family="Liberation Sans" font-size="10.8" fill="#fff" stroke="#fff" stroke-width="0.5">15</text>
<g transform="translate(962.98,338.65) scale(0.101) translate(-150,-150)" fill="#d44848"><use href="#male"/></g>
<text x="978.5" y="353.6" text-anchor="end" font-family="Liberation Sans" font-size="10.8" fill="#fff" stroke="#fff" stroke-width="0.5">14</text>
<g transform="translate(982.96,311.15) scale(0.101) translate(-150,-150)" fill="#a8e2b0"><use href="#female"/></g>
<text x="998.5" y="326.1" text-anchor="end" font-family="Liberation Sans" font-size="10.8" fill="#fff" stroke="#fff" stroke-width="0.5">67</text>
<g transform="translate(982.96,277.15) scale(0.101) translate(-150,-150)" fill="#b4e6ba"><use href="#female"/></g>
<text x="998.5" y="292.2" text-anchor="end" font-family="Liberation Sans" font-size="10.8" fill="#fff" stroke="#fff" stroke-width="0.5">64</text>
<g transform="translate(962.98,249.65) scale(0.101) translate(-150,-150)" fill="#d0eed3"><use href="#female"/></g>
<text x="978.5" y="264.7" text-anchor="end" font-family="Liberation Sans" font-size="10.8" fill="#fff" stroke="#fff" stroke-width="0.5">55</text>
<g transform="translate(823.00,52.70) scale(0.101) translate(-150,-150)" fill="#c6ecca"><use href="#female"/></g>
<text x="838.5" y="67.7" text-anchor="end" font-family="Liberation Sans" font-size="10.8" fill="#fff" stroke="#fff" stroke-width="0.5">64</text>
<g transform="translate(790.67,63.20) scale(0.101) translate(-150,-150)" fill="#0bbf3f"><use href="#male"/><circle cx="150" cy="134" r="35" fill="#fff"/></g>
<text x="806.2" y="78.2" text-anchor="end" font-family="Liberation Sans" font-size="10.8" fill="#fff" stroke="#fff" stroke-width="0.5">100</text>
<g transform="translate(770.69,90.70) scale(0.101) translate(-150,-150)" fill="#0bbf3f"><use href="#male"/><circle cx="150" cy="134" r="35" fill="#fff"/></g>
<text x="786.2" y="105.7" text-anchor="end" font-family="Liberation Sans" font-size="10.8" fill="#fff" stroke="#fff" stroke-width="0.5">100</text>
<g transform="translate(770.69,124.70) scale(0.101) translate(-150,-150)" fill="#0bbf3f"><use href="#male"/><circle cx="150" cy="134" r="35" fill="#fff"/></g>
<text x="786.2" y="139.7" text-anchor="end" font-family="Liberation Sans" font-size="10.8" fill="#fff" stroke="#fff" stroke-width="0.5">100</text>
<g transform="translate(790.67,152.20) scale(0.101) translate(-150,-150)" fill="#e4f6e4"><use href="#female"/></g>
<text x="806.2" y="167.2" text-anchor="end" font-family="Liberation Sans" font-size="10.8" fill="#fff" stroke="#fff" stroke-width="0.5">54</text>
<g transform="translate(823.00,162.70) scale(0.101) translate(-150,-150)" fill="#d4f0d6"><use href="#female"/></g>
<text x="838.5" y="177.7" text-anchor="end" font-family="Liberation Sans" font-size="10.8" fill="#fff" stroke="#fff" stroke-width="0.5">56</text>
<g transform="translate(855.33,152.20) scale(0.101) translate(-150,-150)" fill="#e06262"><use href="#male"/></g>
<text x="870.8" y="167.2" text-anchor="end" font-family="Liberation Sans" font-size="10.8" fill="#fff" stroke="#fff" stroke-width="0.5">15</text>
<g transform="translate(875.31,124.70) scale(0.101) translate(-150,-150)" fill="#d44848"><use href="#male"/></g>
<text x="890.8" y="139.7" text-anchor="end" font-family="Liberation Sans" font-size="10.8" fill="#fff" stroke="#fff" stroke-width="0.5">14</text>
<g transform="translate(875.31,90.70) scale(0.101) translate(-150,-150)" fill="#e06262"><use href="#male"/></g>
<text x="890.8" y="105.7" text-anchor="end" font-family="Liberation Sans" font-size="10.8" fill="#fff" stroke="#fff" stroke-width="0.5">17</text>
<g transform="translate(855.33,63.20) scale(0.101) translate(-150,-150)" fill="#0bbf3f"><use href="#male"/><circle cx="150" cy="134" r="35" fill="#fff"/></g>
<text x="870.8" y="78.2" text-anchor="end" font-family="Liberation Sans" font-size="10.8" fill="#fff" stroke="#fff" stroke-width="0.5">100</text>
<g transform="translate(715.35,114.85) scale(0.101) translate(-150,-150)" fill="#cdebd0"><use href="#female"/></g>
<text x="730.9" y="129.9" text-anchor="end" font-family="Liberation Sans" font-size="10.8" fill="#fff" stroke="#fff" stroke-width="0.5">60</text>
<g transform="translate(683.02,125.35) scale(0.101) translate(-150,-150)" fill="#8ed89b"><use href="#female"/></g>
<text x="698.5" y="140.4" text-anchor="end" font-family="Liberation Sans" font-size="10.8" fill="#fff" stroke="#fff" stroke-width="0.5">72</text>
<g transform="translate(663.04,152.85) scale(0.101) translate(-150,-150)" fill="#a8e0b0"><use href="#female"/><circle cx="150" cy="134" r="35" fill="#000"/></g>
<text x="678.5" y="167.9" text-anchor="end" font-family="Liberation Sans" font-size="10.8" fill="#fff" stroke="#fff" stroke-width="0.5">68</text>
<g transform="translate(663.04,186.85) scale(0.101) translate(-150,-150)" fill="#d8f0d8"><use href="#female"/></g>
<text x="678.5" y="201.8" text-anchor="end" font-family="Liberation Sans" font-size="10.8" fill="#fff" stroke="#fff" stroke-width="0.5">60</text>
<g transform="translate(683.02,214.35) scale(0.101) translate(-150,-150)" fill="#e05656"><use href="#male"/></g>
<text x="698.5" y="229.3" text-anchor="end" font-family="Liberation Sans" font-size="10.8" fill="#fff" stroke="#fff" stroke-width="0.5">15</text>
<g transform="translate(715.35,224.85) scale(0.101) translate(-150,-150)" fill="#0bbf3f"><use href="#male"/><circle cx="150" cy="134" r="35" fill="#fff"/></g>
<text x="730.9" y="239.9" text-anchor="end" font-family="Liberation Sans" font-size="10.8" fill="#fff" stroke="#fff" stroke-width="0.5">100</text>
<g transform="translate(747.68,214.35) scale(0.101) translate(-150,-150)" fill="#0bbf3f"><use href="#male"/><circle cx="150" cy="134" r="35" fill="#fff"/></g>
<text x="763.2" y="229.3" text-anchor="end" font-family="Liberation Sans" font-size="10.8" fill="#fff" stroke="#fff" stroke-width="0.5">100</text>
<g transform="translate(767.66,186.85) scale(0.101) translate(-150,-150)" fill="#f4d4d4"><use href="#female"/></g>
<text x="783.2" y="201.8" text-anchor="end" font-family="Liberation Sans" font-size="10.8" fill="#fff" stroke="#fff" stroke-width="0.5">44</text>
<g transform="translate(767.66,152.85) scale(0.101) translate(-150,-150)" fill="#0bbf3f"><use href="#male"/><circle cx="150" cy="134" r="35" fill="#fff"/></g>
<text x="783.2" y="167.9" text-anchor="end" font-family="Liberation Sans" font-size="10.8" fill="#fff" stroke="#fff" stroke-width="0.5">100</text>
<g transform="translate(747.68,125.35) scale(0.101) translate(-150,-150)" fill="#0bbf3f"><use href="#male"/><circle cx="150" cy="134" r="35" fill="#fff"/></g>
<text x="763.2" y="140.4" text-anchor="end" font-family="Liberation Sans" font-size="10.8" fill="#fff" stroke="#fff" stroke-width="0.5">100</text>
<g transform="translate(930.65,114.85) scale(0.101) translate(-150,-150)" fill="#bfebc4"><use href="#female"/></g>
<text x="946.1" y="129.9" text-anchor="end" font-family="Liberation Sans" font-size="10.8" fill="#fff" stroke="#fff" stroke-width="0.5">61</text>
<g transform="translate(898.32,125.35) scale(0.101) translate(-150,-150)" fill="#b8e8bf"><use href="#female"/></g>
<text x="913.8" y="140.4" text-anchor="end" font-family="Liberation Sans" font-size="10.8" fill="#fff" stroke="#fff" stroke-width="0.5">62</text>
<g transform="translate(878.34,152.85) scale(0.101) translate(-150,-150)" fill="#0bbf3f"><use href="#male"/><circle cx="150" cy="134" r="35" fill="#fff"/></g>
<text x="893.8" y="167.9" text-anchor="end" font-family="Liberation Sans" font-size="10.8" fill="#fff" stroke="#fff" stroke-width="0.5">100</text>
<g transform="translate(878.34,186.85) scale(0.101) translate(-150,-150)" fill="#e06262"><use href="#male"/></g>
<text x="893.8" y="201.8" text-anchor="end" font-family="Liberation Sans" font-size="10.8" fill="#fff" stroke="#fff" stroke-width="0.5">17</text>
<g transform="translate(898.32,214.35) scale(0.101) translate(-150,-150)" fill="#e8f6e8"><use href="#female"/></g>
<text x="913.8" y="229.3" text-anchor="end" font-family="Liberation Sans" font-size="10.8" fill="#fff" stroke="#fff" stroke-width="0.5">50</text>
<g transform="translate(930.65,224.85) scale(0.101) translate(-150,-150)" fill="#e06262"><use href="#male"/></g>
<text x="946.1" y="239.9" text-anchor="end" font-family="Liberation Sans" font-size="10.8" fill="#fff" stroke="#fff" stroke-width="0.5">17</text>
<g transform="translate(962.98,214.35) scale(0.101) translate(-150,-150)" fill="#b4e6ba"><use href="#female"/></g>
<text x="978.5" y="229.3" text-anchor="end" font-family="Liberation Sans" font-size="10.8" fill="#fff" stroke="#fff" stroke-width="0.5">65</text>
<g transform="translate(982.96,186.85) scale(0.101) translate(-150,-150)" fill="#bfebc4"><use href="#female"/></g>
<text x="998.5" y="201.8" text-anchor="end" font-family="Liberation Sans" font-size="10.8" fill="#fff" stroke="#fff" stroke-width="0.5">61</text>
<g transform="translate(982.96,152.85) scale(0.101) translate(-150,-150)" fill="#e05656"><use href="#male"/></g>
<text x="998.5" y="167.9" text-anchor="end" font-family="Liberation Sans" font-size="10.8" fill="#fff" stroke="#fff" stroke-width="0.5">15</text>
<g transform="translate(962.98,125.35) scale(0.101) translate(-150,-150)" fill="#e06262"><use href="#male"/></g>
<text x="978.5" y="140.4" text-anchor="end" font-family="Liberation Sans" font-size="10.8" fill="#fff" stroke="#fff" stroke-width="0.5">16</text>
</svg>
<div class="box" style="left:15px;top:434px;width:305px;height:165px;background:#e7e3c7;box-shadow: inset 1px 1px 0 #8c8c8c, inset 2px 2px 0 #fff, inset -1px -1px 0 #6e6c58, inset -2px -2px 0 #9e9b80"></div>
<div class="box" style="left:44px;top:454px;width:179px;height:127px;background:#fff"></div>
<svg class="t" style="left:0;top:0" width="1025" height="620" font-family="Liberation Sans">
<text x="133.5" y="448.8" font-size="11.6" font-weight="700" text-anchor="middle" >Safe Sex Likelihood Compone...</text>
<text x="41" y="469" font-size="11" font-weight="400" text-anchor="end" letter-spacing="0.35">105</text>
<text x="41" y="577" font-size="11" font-weight="400" text-anchor="end" letter-spacing="0.35">0</text>
<text x="44.5" y="592.5" font-size="11" font-weight="400" text-anchor="start" letter-spacing="0.35">0</text>
<text x="219.5" y="592.5" font-size="11" font-weight="400" text-anchor="end" letter-spacing="0.35">290</text>
<rect x="227.5" y="454.5" width="11" height="11" fill="#2d9ac7" stroke="#111" stroke-width="1"/>
<text x="242.5" y="465" font-size="11" font-weight="400" text-anchor="start" letter-spacing="0.35">M Attitude</text>
<rect x="227.5" y="470.5" width="11" height="11" fill="#3e64b0" stroke="#111" stroke-width="1"/>
<text x="242.5" y="481" font-size="11" font-weight="400" text-anchor="start" letter-spacing="0.35">M Certainty</text>
<rect x="227.5" y="486.5" width="11" height="11" fill="#54c4c4" stroke="#111" stroke-width="1"/>
<text x="242.5" y="497" font-size="11" font-weight="400" text-anchor="start" letter-spacing="0.35">M Justification</text>
<rect x="227.5" y="502.5" width="11" height="11" fill="#a81b6a" stroke="#111" stroke-width="1"/>
<text x="242.5" y="513" font-size="11" font-weight="400" text-anchor="start" letter-spacing="0.35">F Attitude</text>
<rect x="227.5" y="518.5" width="11" height="11" fill="#e04030" stroke="#111" stroke-width="1"/>
<text x="242.5" y="529" font-size="11" font-weight="400" text-anchor="start" letter-spacing="0.35">F Certainty</text>
<rect x="227.5" y="534.5" width="11" height="11" fill="#ec9aaa" stroke="#111" stroke-width="1"/>
<text x="242.5" y="545" font-size="11" font-weight="400" text-anchor="start" letter-spacing="0.35">F Justification</text>
<polyline points="43.92,536.62 51.97,539.23 61.76,550.11 72.64,556.64 94.41,562.08 127.05,568.61 159.70,572.96 185.81,576.22 218.89,576.22" fill="none" stroke="#ec9aaa" stroke-width="1.2"/>
<polyline points="43.92,485.26 218.89,485.26" fill="none" stroke="#a81b6a" stroke-width="1.2"/>
<polyline points="43.92,529.43 44.79,523.99 48.71,525.08 53.06,528.35 61.76,535.96 74.82,541.40 75.26,538.14 78.08,540.32 93.97,544.02 94.41,535.96 109.64,538.14 111.82,536.62 128.14,539.23 129.23,537.05 145.55,540.32 146.64,536.62 172.75,539.66 173.84,536.62 204.31,536.62 205.40,532.26 218.89,532.26" fill="none" stroke="#54c4c4" stroke-width="1.2"/>
<polyline points="43.92,556.20 44.79,550.54 60.67,550.54 61.11,543.58 74.82,543.58 75.26,540.32 93.97,540.32 94.41,534.44 109.64,534.44 111.82,530.52 128.14,530.52 128.57,527.26 145.55,527.26 145.98,524.43 173.84,524.43 174.28,521.38 204.31,521.38 205.40,517.46 218.89,517.46" fill="none" stroke="#2d9ac7" stroke-width="1.2"/>
<polyline points="43.92,544.67 61.76,533.79 74.82,525.08 87.88,514.20 100.94,502.23 111.82,491.35 120.52,481.56 131.40,472.85 144.46,466.97 157.52,463.49 170.58,461.32 192.34,460.23 218.89,460.23" fill="none" stroke="#3e64b0" stroke-width="1.2"/>
<polyline points="43.92,545.32 61.76,533.79 74.82,526.17 87.88,516.38 103.11,504.41 113.99,494.61 124.87,484.82 135.76,475.03 148.81,468.50 161.87,464.15 174.93,462.40 192.34,460.88 218.89,460.23" fill="none" stroke="#e04030" stroke-width="1.2"/>
</svg>
<div class="box" style="left:325px;top:434px;width:230px;height:165px;background:#e7e3c7;box-shadow: inset 1px 1px 0 #8c8c8c, inset 2px 2px 0 #fff, inset -1px -1px 0 #6e6c58, inset -2px -2px 0 #9e9b80"></div>
<div class="box" style="left:347px;top:454px;width:159px;height:127px;background:#fff"></div>
<svg class="t" style="left:0;top:0" width="1025" height="620" font-family="Liberation Sans">
<text x="426.5" y="448.8" font-size="11.6" font-weight="700" text-anchor="middle" >Average safe sex likelihood</text>
<text x="344" y="469" font-size="11" font-weight="400" text-anchor="end" letter-spacing="0.35">75</text>
<text x="344" y="577" font-size="11" font-weight="400" text-anchor="end" letter-spacing="0.35">0</text>
<text x="347.5" y="592.5" font-size="11" font-weight="400" text-anchor="start" letter-spacing="0.35">0</text>
<text x="502" y="592.5" font-size="11" font-weight="400" text-anchor="end" letter-spacing="0.35">290</text>
<text x="417.5" y="592.5" font-size="11" font-weight="400" text-anchor="middle" letter-spacing="0.35">weeks</text>
<text transform="translate(341,519) rotate(-90)" font-size="11" letter-spacing="0.35" text-anchor="middle">percentages</text>
<rect x="510.5" y="454.5" width="11" height="11" fill="#59b03c" stroke="#111" stroke-width="1"/>
<text x="525.5" y="465" font-size="11" font-weight="400" text-anchor="start" letter-spacing="0.35">Total</text>
<rect x="510.5" y="470.5" width="11" height="11" fill="#2d9ac7" stroke="#111" stroke-width="1"/>
<text x="525.5" y="481" font-size="11" font-weight="400" text-anchor="start" letter-spacing="0.35">M</text>
<rect x="510.5" y="486.5" width="11" height="11" fill="#ec9aaa" stroke="#111" stroke-width="1"/>
<text x="525.5" y="497" font-size="11" font-weight="400" text-anchor="start" letter-spacing="0.35">F</text>
<polyline points="347.34,465.93 352.02,466.71 355.93,468.27 360.61,470.14 366.85,472.17 372.32,473.42 384.81,474.20 401.20,474.98 412.91,476.07 427.73,477.32 452.71,478.42 472.22,479.35 501.88,479.35" fill="none" stroke="#ec9aaa" stroke-width="1.2"/>
<polyline points="347.34,501.05 348.90,497.46 351.24,497.46 355.93,499.18 360.61,501.36 362.95,498.40 365.29,499.02 369.20,500.27 374.66,500.27 376.22,498.40 379.34,498.71 381.68,499.49 390.27,500.27 392.61,495.59 398.86,495.59 400.42,496.37 405.10,496.37 405.88,494.49 414.47,494.49 416.03,495.59 421.49,495.27 423.05,493.25 430.86,493.25 431.64,494.34 436.32,494.34 437.88,491.37 440.22,491.37 441.78,492.46 460.52,492.46 462.08,490.59 489.40,490.59 490.96,488.25 501.88,488.25" fill="none" stroke="#59b03c" stroke-width="1.2"/>
<polyline points="347.34,536.95 348.90,528.37 351.24,529.15 354.37,529.93 360.61,532.27 361.39,532.74 362.17,526.03 366.85,527.12 371.54,528.06 373.88,528.37 375.44,523.69 382.46,524.93 391.05,525.25 392.61,516.66 396.51,517.44 405.10,517.44 405.88,512.76 416.03,513.54 421.49,514.32 422.58,509.64 427.73,510.42 434.76,510.89 436.32,511.20 437.88,506.51 450.37,506.51 451.93,507.61 461.30,507.61 462.39,502.61 489.40,502.61 490.96,498.71 501.88,498.71" fill="none" stroke="#2d9ac7" stroke-width="1.2"/>
</svg>
<div class="box" style="left:560px;top:434px;width:235px;height:165px;background:#e7e3c7;box-shadow: inset 1px 1px 0 #8c8c8c, inset 2px 2px 0 #fff, inset -1px -1px 0 #6e6c58, inset -2px -2px 0 #9e9b80"></div>
<div class="box" style="left:582px;top:454px;width:183px;height:127px;background:#fff"></div>
<svg class="t" style="left:0;top:0" width="1025" height="620" font-family="Liberation Sans">
<text x="673.5" y="448.8" font-size="11.6" font-weight="700" text-anchor="middle" >Safe Sex Likelihood Histogram</text>
<text x="579" y="469" font-size="11" font-weight="400" text-anchor="end" letter-spacing="0.35">24</text>
<text x="579" y="577" font-size="11" font-weight="400" text-anchor="end" letter-spacing="0.35">0</text>
<text x="582.5" y="592.5" font-size="11" font-weight="400" text-anchor="start" letter-spacing="0.35">0</text>
<text x="760.5" y="592.5" font-size="11" font-weight="400" text-anchor="end" letter-spacing="0.35">100</text>
<text x="664.5" y="592.5" font-size="11" font-weight="400" text-anchor="middle" letter-spacing="0.35">likelihood</text>
<text transform="translate(576,519) rotate(-90)" font-size="11" letter-spacing="0.35" text-anchor="middle"># agents</text>
<rect x="768.5" y="454.5" width="11" height="11" fill="#3e64b0" stroke="#111" stroke-width="1"/>
<text x="783.5" y="465" font-size="11" font-weight="400" text-anchor="start" letter-spacing="0.35">M</text>
<rect x="768.5" y="470.5" width="11" height="11" fill="#ec9aaa" stroke="#111" stroke-width="1"/>
<text x="783.5" y="481" font-size="11" font-weight="400" text-anchor="start" letter-spacing="0.35">F</text>
<rect x="655.5" y="574.8" width="17.3" height="5.2" fill="none" stroke="#ec9aaa" stroke-width="1.1"/>
<rect x="673.8" y="517.4" width="17.3" height="62.6" fill="none" stroke="#ec9aaa" stroke-width="1.1"/>
<rect x="692.1" y="501.7" width="17.3" height="78.3" fill="none" stroke="#ec9aaa" stroke-width="1.1"/>
<rect x="710.3" y="569.6" width="17.3" height="10.4" fill="none" stroke="#ec9aaa" stroke-width="1.1"/>
<polyline points="600.3,580.0 600.3,486.0 618.5,486.0 618.5,580.0 746.3,580.0 746.3,517.4 764.6,517.4 764.6,580.0" fill="none" stroke="#3e64b0" stroke-width="1.1"/>
</svg>
<div class="box" style="left:800px;top:434px;width:220px;height:165px;background:#e7e3c7;box-shadow: inset 1px 1px 0 #8c8c8c, inset 2px 2px 0 #fff, inset -1px -1px 0 #6e6c58, inset -2px -2px 0 #9e9b80"></div>
<div class="box" style="left:829px;top:454px;width:142px;height:127px;background:#fff"></div>
<svg class="t" style="left:0;top:0" width="1025" height="620" font-family="Liberation Sans">
<text x="900.0" y="448.8" font-size="11.6" font-weight="700" text-anchor="middle" >% of Population Infected</text>
<text x="826" y="469" font-size="11" font-weight="400" text-anchor="end" letter-spacing="0.35">100</text>
<text x="826" y="577" font-size="11" font-weight="400" text-anchor="end" letter-spacing="0.35">0</text>
<text x="829.5" y="592.5" font-size="11" font-weight="400" text-anchor="start" letter-spacing="0.35">0</text>
<text x="967.5" y="592.5" font-size="11" font-weight="400" text-anchor="end" letter-spacing="0.35">290</text>
<text x="890.5" y="592.5" font-size="11" font-weight="400" text-anchor="middle" letter-spacing="0.35">weeks</text>
<text transform="translate(822.5,518) rotate(-90)" font-size="11" letter-spacing="0.35" text-anchor="middle">percentage</text>
<rect x="975.5" y="454.5" width="11" height="11" fill="#59b03c" stroke="#111" stroke-width="1"/>
<text x="990.5" y="465" font-size="11" font-weight="400" text-anchor="start" letter-spacing="0.35">Total</text>
<rect x="975.5" y="470.5" width="11" height="11" fill="#2d9ac7" stroke="#111" stroke-width="1"/>
<text x="990.5" y="481" font-size="11" font-weight="400" text-anchor="start" letter-spacing="0.35">M</text>
<rect x="975.5" y="486.5" width="11" height="11" fill="#ec9aaa" stroke="#111" stroke-width="1"/>
<text x="990.5" y="497" font-size="11" font-weight="400" text-anchor="start" letter-spacing="0.35">F</text>
<polyline points="842.27,572.37 842.56,569.44 843.29,567.39 853.54,567.39 854.27,565.49 868.61,565.49 869.64,561.54 881.34,561.54 882.08,559.34 895.98,559.34 896.71,557.44 909.59,557.44 910.17,555.39 931.54,555.39 932.57,553.34 956.42,553.34 957.01,551.29 967.69,551.29" fill="none" stroke="#59b03c" stroke-width="1.2"/>
<polyline points="842.27,572.37 842.85,565.49 843.29,563.30 853.54,563.30 854.56,559.20 868.61,559.20 869.64,551.29 881.34,551.29 881.78,546.46 895.98,546.46 896.71,542.37 909.59,542.37 909.88,538.42 931.54,538.42 932.57,534.32 956.42,534.32 957.01,530.37 967.69,530.37" fill="none" stroke="#2d9ac7" stroke-width="1.2"/>
<polyline points="829.39,576.47 830.85,572.37 967.69,572.37" fill="none" stroke="#ec9aaa" stroke-width="1.2"/>
</svg>
</body></html>
